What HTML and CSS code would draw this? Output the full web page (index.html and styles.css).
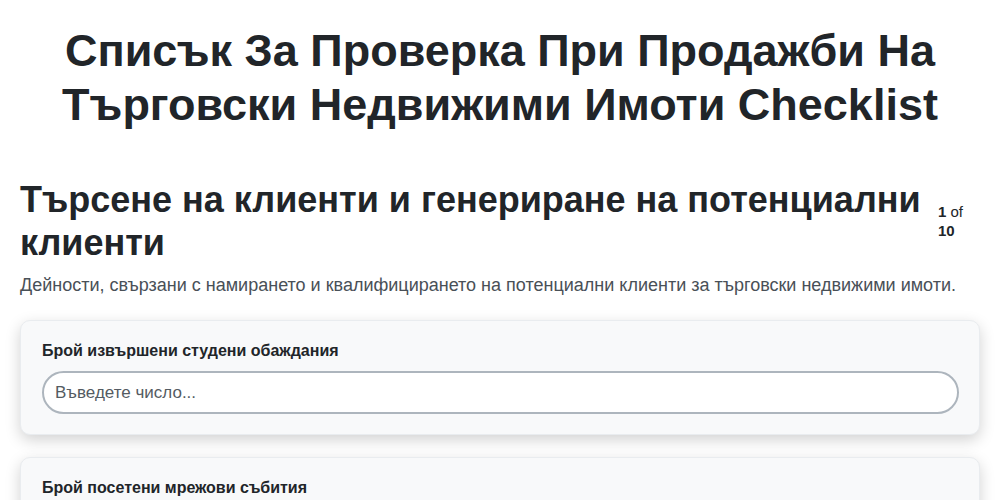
FILE: index.html
```html
<!DOCTYPE html>
<html lang="bg">
<head>
<meta charset="utf-8">
<title>Checklist</title>
<link rel="stylesheet" href="styles.css">
</head>
<body>
<div class="page">
  <h1 class="title">Списък За Проверка При Продажби На Търговски Недвижими Имоти Checklist</h1>
  <div class="section-head">
    <h2 class="section-title">Търсене на клиенти и генериране на потенциални клиенти</h2>
    <div class="counter"><b>1</b> of <b>10</b></div>
  </div>
  <p class="section-desc">Дейности, свързани с намирането и квалифицирането на потенциални клиенти за търговски недвижими имоти.</p>
  <div class="card">
    <label class="field-label">Брой извършени студени обаждания</label>
    <input class="field-input" type="text" placeholder="Въведете число...">
  </div>
  <div class="card">
    <label class="field-label">Брой посетени мрежови събития</label>
    <input class="field-input" type="text" placeholder="Въведете число...">
  </div>
</div>
</body>
</html>
```
FILE: styles.css
```css
* { box-sizing: border-box; }
html, body { margin: 0; padding: 0; background: #ffffff; }
body { font-family: "Liberation Sans", Arial, sans-serif; color: #212529; }
.page { padding: 20px 20px; }
.title {
  margin: 4px 0 46px;
  text-align: center;
  font-size: 45px;
  line-height: 54px;
  font-weight: 700;
  color: #212529;
}
.section-head {
  display: flex;
  align-items: flex-start;
  gap: 14px;
}
.section-title {
  flex: 1;
  margin: 0;
  font-size: 36px;
  line-height: 43px;
  font-weight: 700;
}
.counter {
  width: 42px;
  font-size: 15px;
  line-height: 19px;
  padding-top: 24px;
  color: #212529;
}
.section-desc {
  margin: 9px 0 23px;
  font-size: 18px;
  line-height: 24px;
  color: #495057;
}
.card {
  background: #f8f9fa;
  border: 1px solid #e9ecef;
  border-radius: 10px;
  padding: 20px 20px 20px 21px;
  margin-bottom: 22px;
  box-shadow: 0 5px 15px rgba(0,0,0,0.18);
  display: flex;
  flex-direction: column;
}
.field-label {
  font-size: 16px;
  font-weight: 700;
  line-height: 20px;
  margin-bottom: 10px;
  color: #212529;
}
.field-input {
  height: 43px;
  border: 2px solid #adb5bd;
  border-radius: 22px;
  padding: 0 11px;
  font-family: "Liberation Sans", Arial, sans-serif;
  font-size: 17px;
  color: #212529;
  background: #fff;
}
.field-input::placeholder { color: #545b62; }
```
